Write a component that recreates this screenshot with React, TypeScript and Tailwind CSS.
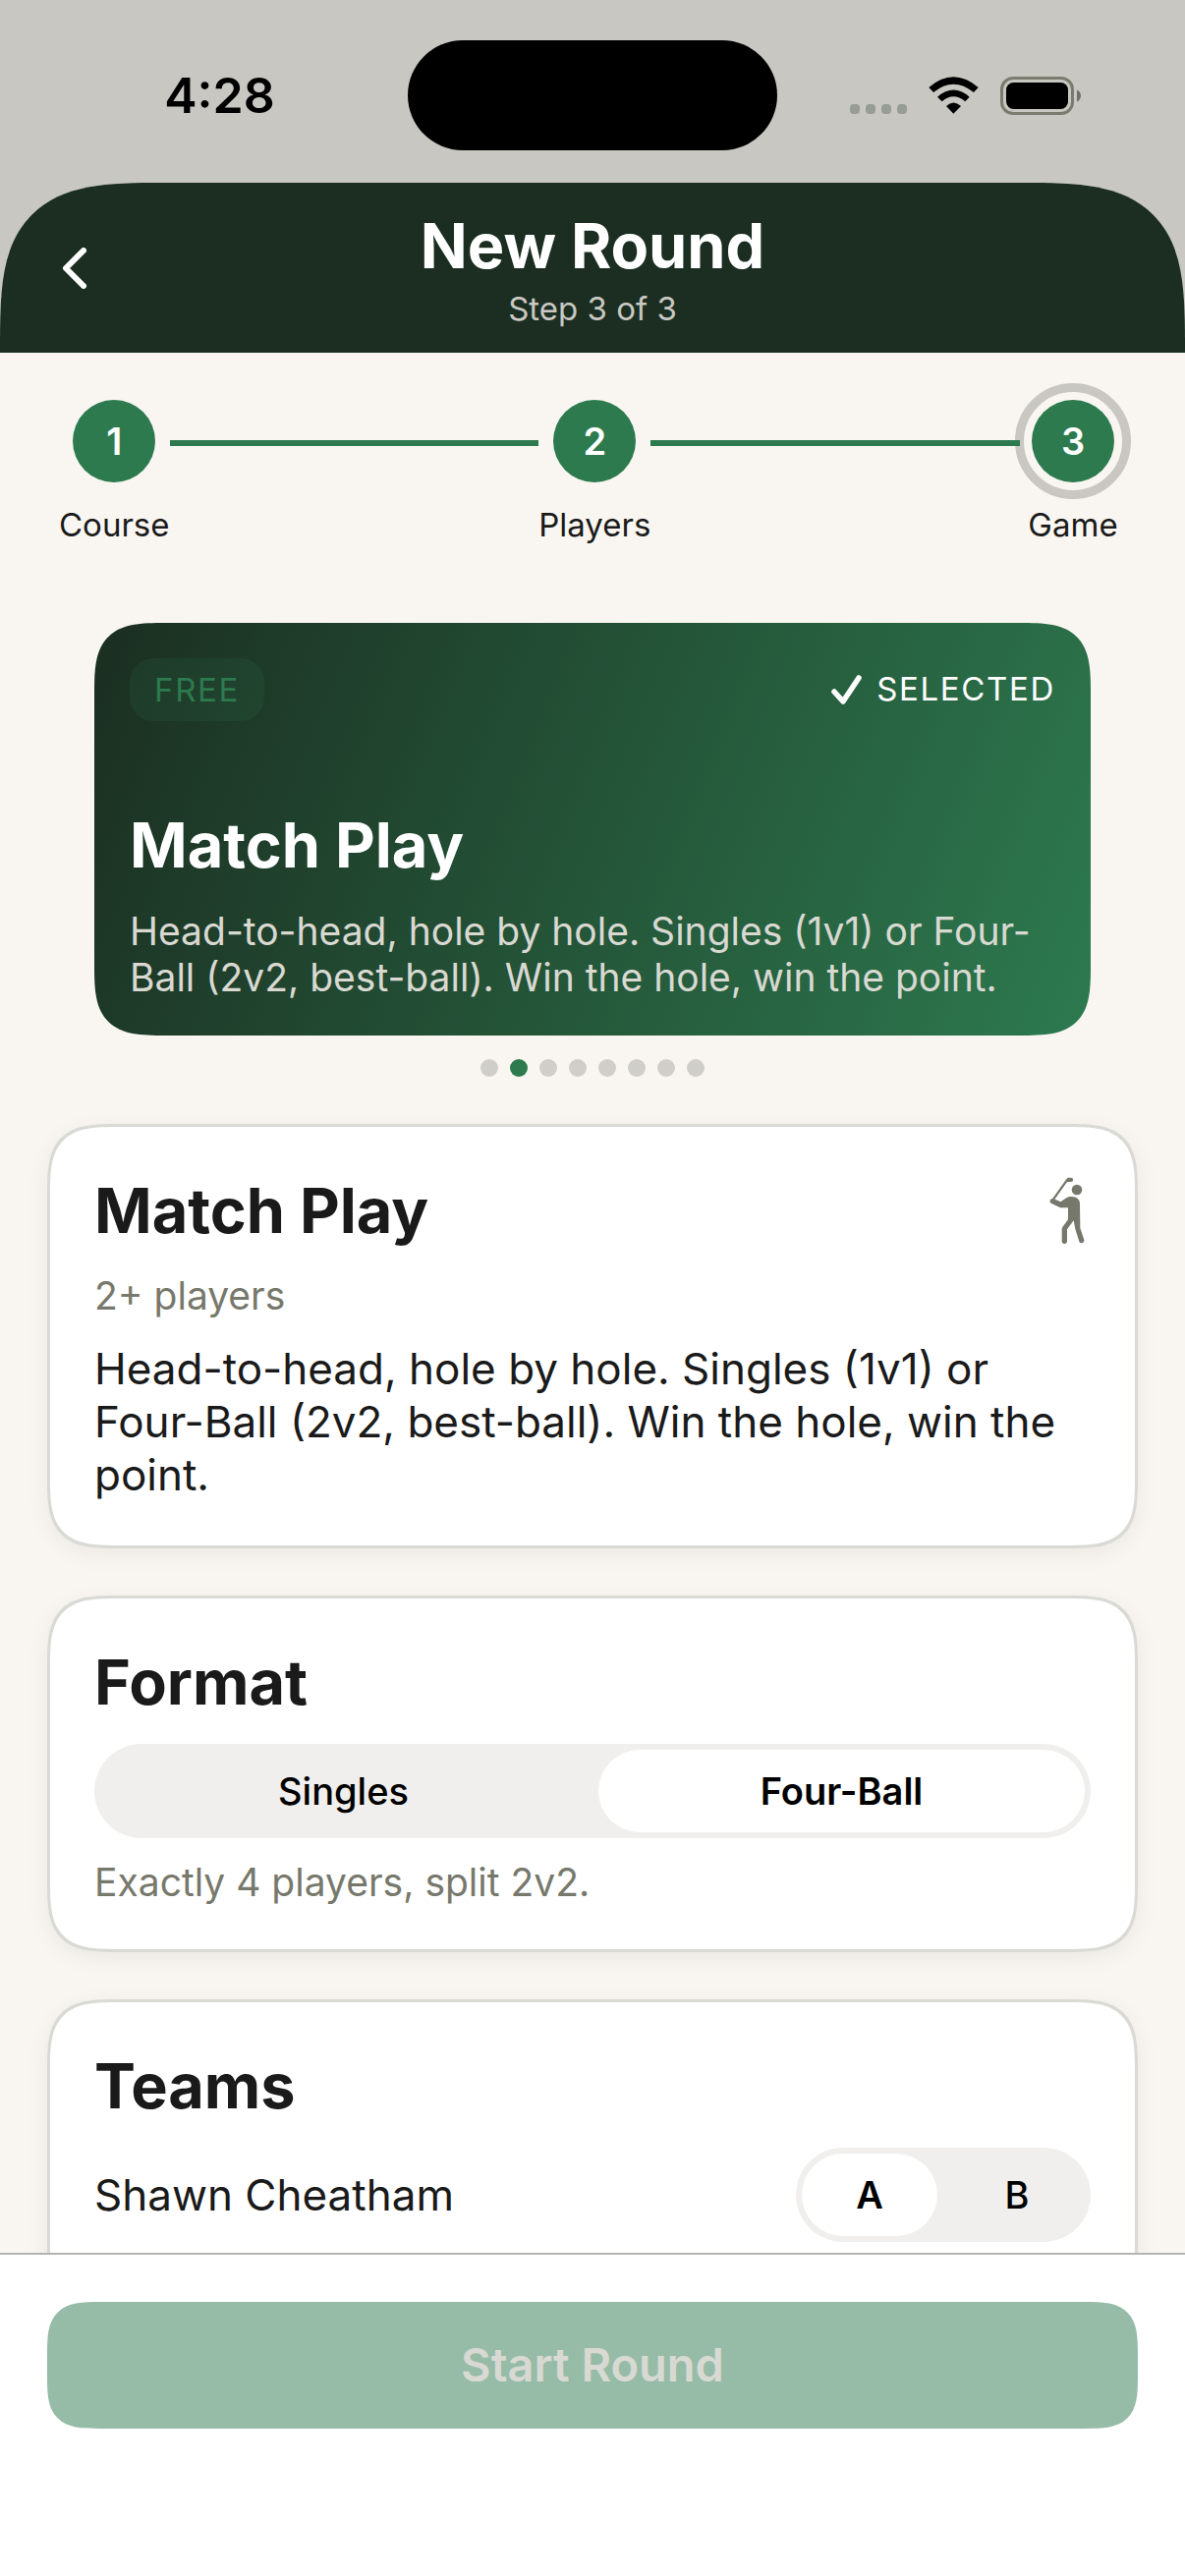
import React, { useState } from 'react'

const steps = ['Course', 'Players', 'Game']
const modeCount = 8
const activeMode = 1

function StatusBar() {
  return (
    <div className="flex h-[186px] shrink-0 items-start pt-[41px] text-black">
      <div className="flex h-[112px] flex-1 items-center justify-center pl-8 text-[50px] font-semibold">4:28</div>
      <div className="h-[112px] w-[376px] rounded-full bg-black" />
      <div className="flex h-[112px] flex-1 items-center justify-center gap-[22px] pr-8">
        <div className="flex gap-[6px] pt-[28px]">
          <span className="size-[10px] rounded-[4px] bg-[#979d94]" />
          <span className="size-[10px] rounded-[4px] bg-[#979d94]" />
          <span className="size-[10px] rounded-[4px] bg-[#979d94]" />
          <span className="size-[10px] rounded-[4px] bg-[#979d94]" />
        </div>
        <svg className="h-[38px] w-[51px]" viewBox="315 55 153 114" fill="currentColor" aria-hidden="true">
          <path d="M316 88Q391 24 467 88L453 103Q391 53 330 103Z" />
          <path d="M342 117Q391 74 440 117L427 131Q391 101 356 131Z" />
          <path d="M369 145Q391 124 414 145L391 168Z" />
        </svg>
        <svg className="h-[39px] w-[82px]" viewBox="0 0 82 39" aria-hidden="true">
          <rect x="1.5" y="1.5" width="72" height="36" rx="11.5" fill="none" stroke="#7b7b70" strokeWidth="3" />
          <rect x="6" y="6" width="63" height="27" rx="7.5" fill="#000" />
          <path d="M78 13.5C80.500 14.500 82 17 82 19.500S80.500 24.500 78 25.500Z" fill="#6f706a" />
        </svg>
      </div>
    </div>
  )
}

function Header() {
  return (
    <header className="grid h-[173px] shrink-0 grid-cols-[152px_1fr_152px] items-center bg-[#1b2e21] text-white">
      <button className="flex size-[132px] items-center justify-center pl-[18px]" aria-label="Back">
        <svg className="h-[42px] w-[25px]" viewBox="0 0 25 42" fill="none" aria-hidden="true">
          <path d="M22 3L4 21L22 39" stroke="#fff" strokeWidth="6" strokeLinecap="round" strokeLinejoin="round" />
        </svg>
      </button>
      <div className="pt-[2px] text-center">
        <h1 className="text-[63px] font-bold leading-[80px]">New Round</h1>
        <p className="text-[33px] leading-[48px] text-[#c9c8c2]">Step 3 of 3</p>
      </div>
    </header>
  )
}

function StepIndicator() {
  return (
    <ol className="flex px-[60px] pt-[48px]">
      {steps.map((step, i) => (
        <React.Fragment key={step}>
          {i > 0 && <li aria-hidden="true" className="mt-[41px] h-[6px] flex-1 bg-[#2d7a4f]" />}
          <li className="flex min-w-[108px] flex-col items-center">
            <span
              className={`relative flex size-[84px] items-center justify-center rounded-full bg-[#2d7a4f] text-[38px] font-semibold text-white ${
                i === 2
                  ? 'before:absolute before:-inset-[17px] before:-z-10 before:rounded-full before:border-[9px] before:border-[#c8c7c1]'
                  : ''
              }`}
            >
              {i + 1}
            </span>
            <span className="mt-[23px] text-[33px] leading-[40px]">{step}</span>
          </li>
        </React.Fragment>
      ))}
    </ol>
  )
}

function ModeCard() {
  return (
    <section className="mx-[96px] mt-[80px] flex h-[420px] flex-col rounded-[48px] bg-[linear-gradient(112deg,#1b2e21_0%,#2d7a4f_100%)] px-[36px] pt-[36px] text-white supports-[corner-shape:squircle]:rounded-[72px] supports-[corner-shape:squircle]:[corner-shape:superellipse(1.66)]">
      <div className="flex items-center justify-between">
        <span className="rounded-[24px] bg-[#2d7a4f]/15 px-[25px] py-[12px] text-[33px] leading-[40px] tracking-wider text-[#2d7a4f]">
          FREE
        </span>
        <span className="flex items-center gap-[15px] text-[33px] tracking-wider">
          <svg className="h-[30px] w-[31px]" viewBox="0 0 31 30" fill="none" aria-hidden="true">
            <path d="M3 17L12 27L28 3" stroke="#fff" strokeWidth="5.500" strokeLinecap="round" strokeLinejoin="round" />
          </svg>
          SELECTED
        </span>
      </div>
      <h2 className="mt-[86px] text-[63px] font-bold leading-[80px]">Match Play</h2>
      <p className="mt-[24px] text-[39px] leading-[47px] text-[#d9d9d2]">
        Head-to-head, hole by hole. Singles (1v1) or Four-Ball (2v2, best-ball). Win the hole, win the point.
      </p>
    </section>
  )
}

function PageDots() {
  return (
    <div className="mt-[24px] flex justify-center gap-[12px]">
      {Array.from({ length: modeCount }, (_, i) => (
        <span key={i} className={`size-[18px] rounded-full ${i === activeMode ? 'bg-[#2d7a4f]' : 'bg-[#cfcec8]'}`} />
      ))}
    </div>
  )
}

function Card({ children, className = 'pb-[45px]' }: { children: React.ReactNode; className?: string }) {
  return (
    <section
      className={`mx-[48px] rounded-[48px] border-[3px] border-[#d9dad4] bg-white px-[45px] pt-[45px] shadow-[0_6px_24px_rgba(0,0,0,0.06)] supports-[corner-shape:squircle]:rounded-[72px] supports-[corner-shape:squircle]:[corner-shape:superellipse(1.66)] ${className}`}
    >
      {children}
    </section>
  )
}

function GolferIcon() {
  return (
    <svg className="h-[69px] w-[42px]" viewBox="84 54 126 207" fill="#77786c" aria-hidden="true">
      <path
        d="M150 62H139L92 128"
        fill="none"
        stroke="#77786c"
        strokeWidth="7"
        strokeLinecap="round"
        strokeLinejoin="round"
      />
      <path d="M139 56H150A6 6 0 0 1 150 69H137Z" />
      <circle cx="168" cy="93" r="16" />
      <path d="M87 124Q83 130 89 134L116 147Q119 148 122 148H141V184L124 207Q122 210 122 214V250A8 8 0 0 0 138 250V214L158 187L163 213L175 251A8 8 0 0 0 190 246L178 210L177 134Q175 115 152 114Q143 113 136 118L118 130L98 121Q91 118 87 124Z" />
    </svg>
  )
}

type SegmentedProps = {
  label: string
  options: string[]
  initial: string
  className: string
}

function Segmented({ label, options, initial, className }: SegmentedProps) {
  const [value, setValue] = useState(initial)
  return (
    <div role="group" aria-label={label} className={`flex h-[96px] gap-[12px] rounded-full bg-[#f0efed] p-[6px] ${className}`}>
      {options.map((option) => (
        <button
          key={option}
          aria-pressed={value === option}
          onClick={() => setValue(option)}
          className={`flex-1 rounded-full text-[38px] text-black ${
            value === option ? 'bg-white font-semibold' : 'font-medium'
          }`}
        >
          {option}
        </button>
      ))}
    </div>
  )
}

export default function App() {
  return (
    <div className="flex h-screen flex-col bg-[#c8c7c1] font-['Inter','Liberation_Sans',sans-serif] text-[#1a1a1a]">
      <StatusBar />
      <div className="isolate flex min-h-0 flex-1 flex-col overflow-hidden rounded-t-[110px] bg-[#f9f6f1] supports-[corner-shape:squircle]:rounded-t-[165px] supports-[corner-shape:squircle]:[corner-shape:superellipse(1.66)]">
        <Header />
        <main className="min-h-0 flex-1 overflow-hidden">
          <StepIndicator />
          <ModeCard />
          <PageDots />
          <div className="mt-[48px] flex flex-col gap-[48px]">
            <Card>
              <div className="flex items-center justify-between">
                <h2 className="text-[63px] font-bold leading-[80px]">Match Play</h2>
                <GolferIcon />
              </div>
              <p className="mt-[23px] text-[39px] leading-[47px] text-[#77786c]">2+ players</p>
              <p className="mt-[24px] text-[44px] leading-[54px]">
                Head-to-head, hole by hole. Singles (1v1) or Four-Ball (2v2, best-ball). Win the hole, win the point.
              </p>
            </Card>
            <Card>
              <h2 className="text-[63px] font-bold leading-[80px]">Format</h2>
              <Segmented
                label="Format"
                options={['Singles', 'Four-Ball']}
                initial="Four-Ball"
                className="mt-[23px] w-full"
              />
              <p className="mt-[21px] text-[39px] leading-[47px] text-[#77786c]">Exactly 4 players, split 2v2.</p>
            </Card>
            <Card className="pb-[120px]">
              <h2 className="text-[63px] font-bold leading-[80px]">Teams</h2>
              <div className="mt-[23px] flex items-center justify-between">
                <p className="text-[44px] leading-[54px]">Shawn Cheatham</p>
                <Segmented label="Team for Shawn Cheatham" options={['A', 'B']} initial="A" className="w-[300px]" />
              </div>
            </Card>
          </div>
        </main>
        <footer className="shrink-0 border-t-2 border-[#b3b5b1] bg-white px-[48px] pb-[150px] pt-[48px]">
          <button
            disabled
            className="h-[129px] w-full rounded-[36px] bg-[#96bca7] text-[47px] font-semibold text-[#d9d9d3] supports-[corner-shape:squircle]:rounded-[54px] supports-[corner-shape:squircle]:[corner-shape:superellipse(1.66)]"
          >
            Start Round
          </button>
        </footer>
      </div>
    </div>
  )
}
